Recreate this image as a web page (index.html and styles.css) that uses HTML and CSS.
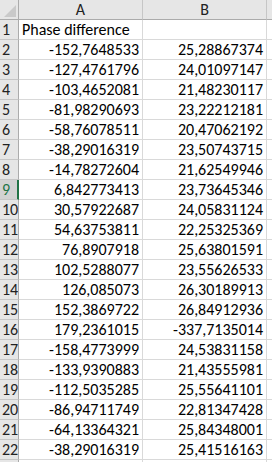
FILE: index.html
```html
<!DOCTYPE html>
<html>
<head>
<meta charset="utf-8">
<link rel="stylesheet" href="styles.css">
</head>
<body>
<div class="sheet">
  <div class="corner"><span class="tri"></span></div>
  <div class="colhead">A</div>
  <div class="colhead">B</div>
  <div class="colhead rest"></div>

  <div class="rowhead">1</div><div class="cell text">Phase difference</div><div class="cell"></div><div class="cell rest"></div>
  <div class="rowhead">2</div><div class="cell">-152,7648533</div><div class="cell">25,28867374</div><div class="cell rest"></div>
  <div class="rowhead">3</div><div class="cell">-127,4761796</div><div class="cell">24,01097147</div><div class="cell rest"></div>
  <div class="rowhead">4</div><div class="cell">-103,4652081</div><div class="cell">21,48230117</div><div class="cell rest"></div>
  <div class="rowhead">5</div><div class="cell">-81,98290693</div><div class="cell">23,22212181</div><div class="cell rest"></div>
  <div class="rowhead">6</div><div class="cell">-58,76078511</div><div class="cell">20,47062192</div><div class="cell rest"></div>
  <div class="rowhead">7</div><div class="cell">-38,29016319</div><div class="cell">23,50743715</div><div class="cell rest"></div>
  <div class="rowhead">8</div><div class="cell">-14,78272604</div><div class="cell">21,62549946</div><div class="cell rest"></div>
  <div class="rowhead active">9</div><div class="cell">6,842773413</div><div class="cell">23,73645346</div><div class="cell rest"></div>
  <div class="rowhead">10</div><div class="cell">30,57922687</div><div class="cell">24,05831124</div><div class="cell rest"></div>
  <div class="rowhead">11</div><div class="cell">54,63753811</div><div class="cell">22,25325369</div><div class="cell rest"></div>
  <div class="rowhead">12</div><div class="cell">76,8907918</div><div class="cell">25,63801591</div><div class="cell rest"></div>
  <div class="rowhead">13</div><div class="cell">102,5288077</div><div class="cell">23,55626533</div><div class="cell rest"></div>
  <div class="rowhead">14</div><div class="cell">126,085073</div><div class="cell">26,30189913</div><div class="cell rest"></div>
  <div class="rowhead">15</div><div class="cell">152,3869722</div><div class="cell">26,84912936</div><div class="cell rest"></div>
  <div class="rowhead">16</div><div class="cell">179,2361015</div><div class="cell">-337,7135014</div><div class="cell rest"></div>
  <div class="rowhead">17</div><div class="cell">-158,4773999</div><div class="cell">24,53831158</div><div class="cell rest"></div>
  <div class="rowhead">18</div><div class="cell">-133,9390883</div><div class="cell">21,43555981</div><div class="cell rest"></div>
  <div class="rowhead">19</div><div class="cell">-112,5035285</div><div class="cell">25,55641101</div><div class="cell rest"></div>
  <div class="rowhead">20</div><div class="cell">-86,94711749</div><div class="cell">22,81347428</div><div class="cell rest"></div>
  <div class="rowhead">21</div><div class="cell">-64,13364321</div><div class="cell">25,84348001</div><div class="cell rest"></div>
  <div class="rowhead">22</div><div class="cell">-38,29016319</div><div class="cell">25,41516163</div><div class="cell rest"></div>
  <div class="rowhead"></div><div class="cell"></div><div class="cell"></div><div class="cell rest"></div>
</div>
</body>
</html>
```

FILE: styles.css
```css
html, body {
  margin: 0;
  padding: 0;
  background: #ffffff;
}
body {
  width: 272px;
  height: 462px;
  overflow: hidden;
  font-family: Carlito, Calibri, Lato, "Liberation Sans", sans-serif;
  font-size: 16px;
  color: #000000;
}
.sheet {
  display: grid;
  grid-template-columns: 19px 124px 124px 1fr;
  grid-auto-rows: 20px;
}
.corner {
  position: relative;
  background: #e6e6e6;
  border-right: 1px solid #ababab;
  border-bottom: 1px solid #ababab;
  box-sizing: border-box;
}
.tri {
  position: absolute;
  right: 2px;
  bottom: 2px;
  width: 0;
  height: 0;
  border-left: 12px solid transparent;
  border-bottom: 12px solid #c9c9c9;
}
.colhead {
  background: #e6e6e6;
  border-right: 1px solid #c6c6c6;
  border-bottom: 1px solid #ababab;
  box-sizing: border-box;
  display: flex;
  align-items: center;
  justify-content: center;
  color: #222222;
}
.colhead.rest {
  border-right: none;
}
.rowhead {
  background: #e6e6e6;
  border-right: 1px solid #ababab;
  border-bottom: 1px solid #c6c6c6;
  box-sizing: border-box;
  display: flex;
  align-items: center;
  padding-left: 2px;
  color: #222222;
  overflow: hidden;
}
.rowhead.active {
  background: #d2d2d2;
  color: #217346;
  border-right: 2px solid #217346;
}
.cell {
  border-right: 1px solid #d9d9d9;
  border-bottom: 1px solid #d9d9d9;
  box-sizing: border-box;
  display: flex;
  align-items: center;
  justify-content: flex-end;
  padding: 0 3px;
  white-space: nowrap;
  overflow: hidden;
}
.cell.text {
  justify-content: flex-start;
}
.cell.rest {
  border-right: none;
}
```
